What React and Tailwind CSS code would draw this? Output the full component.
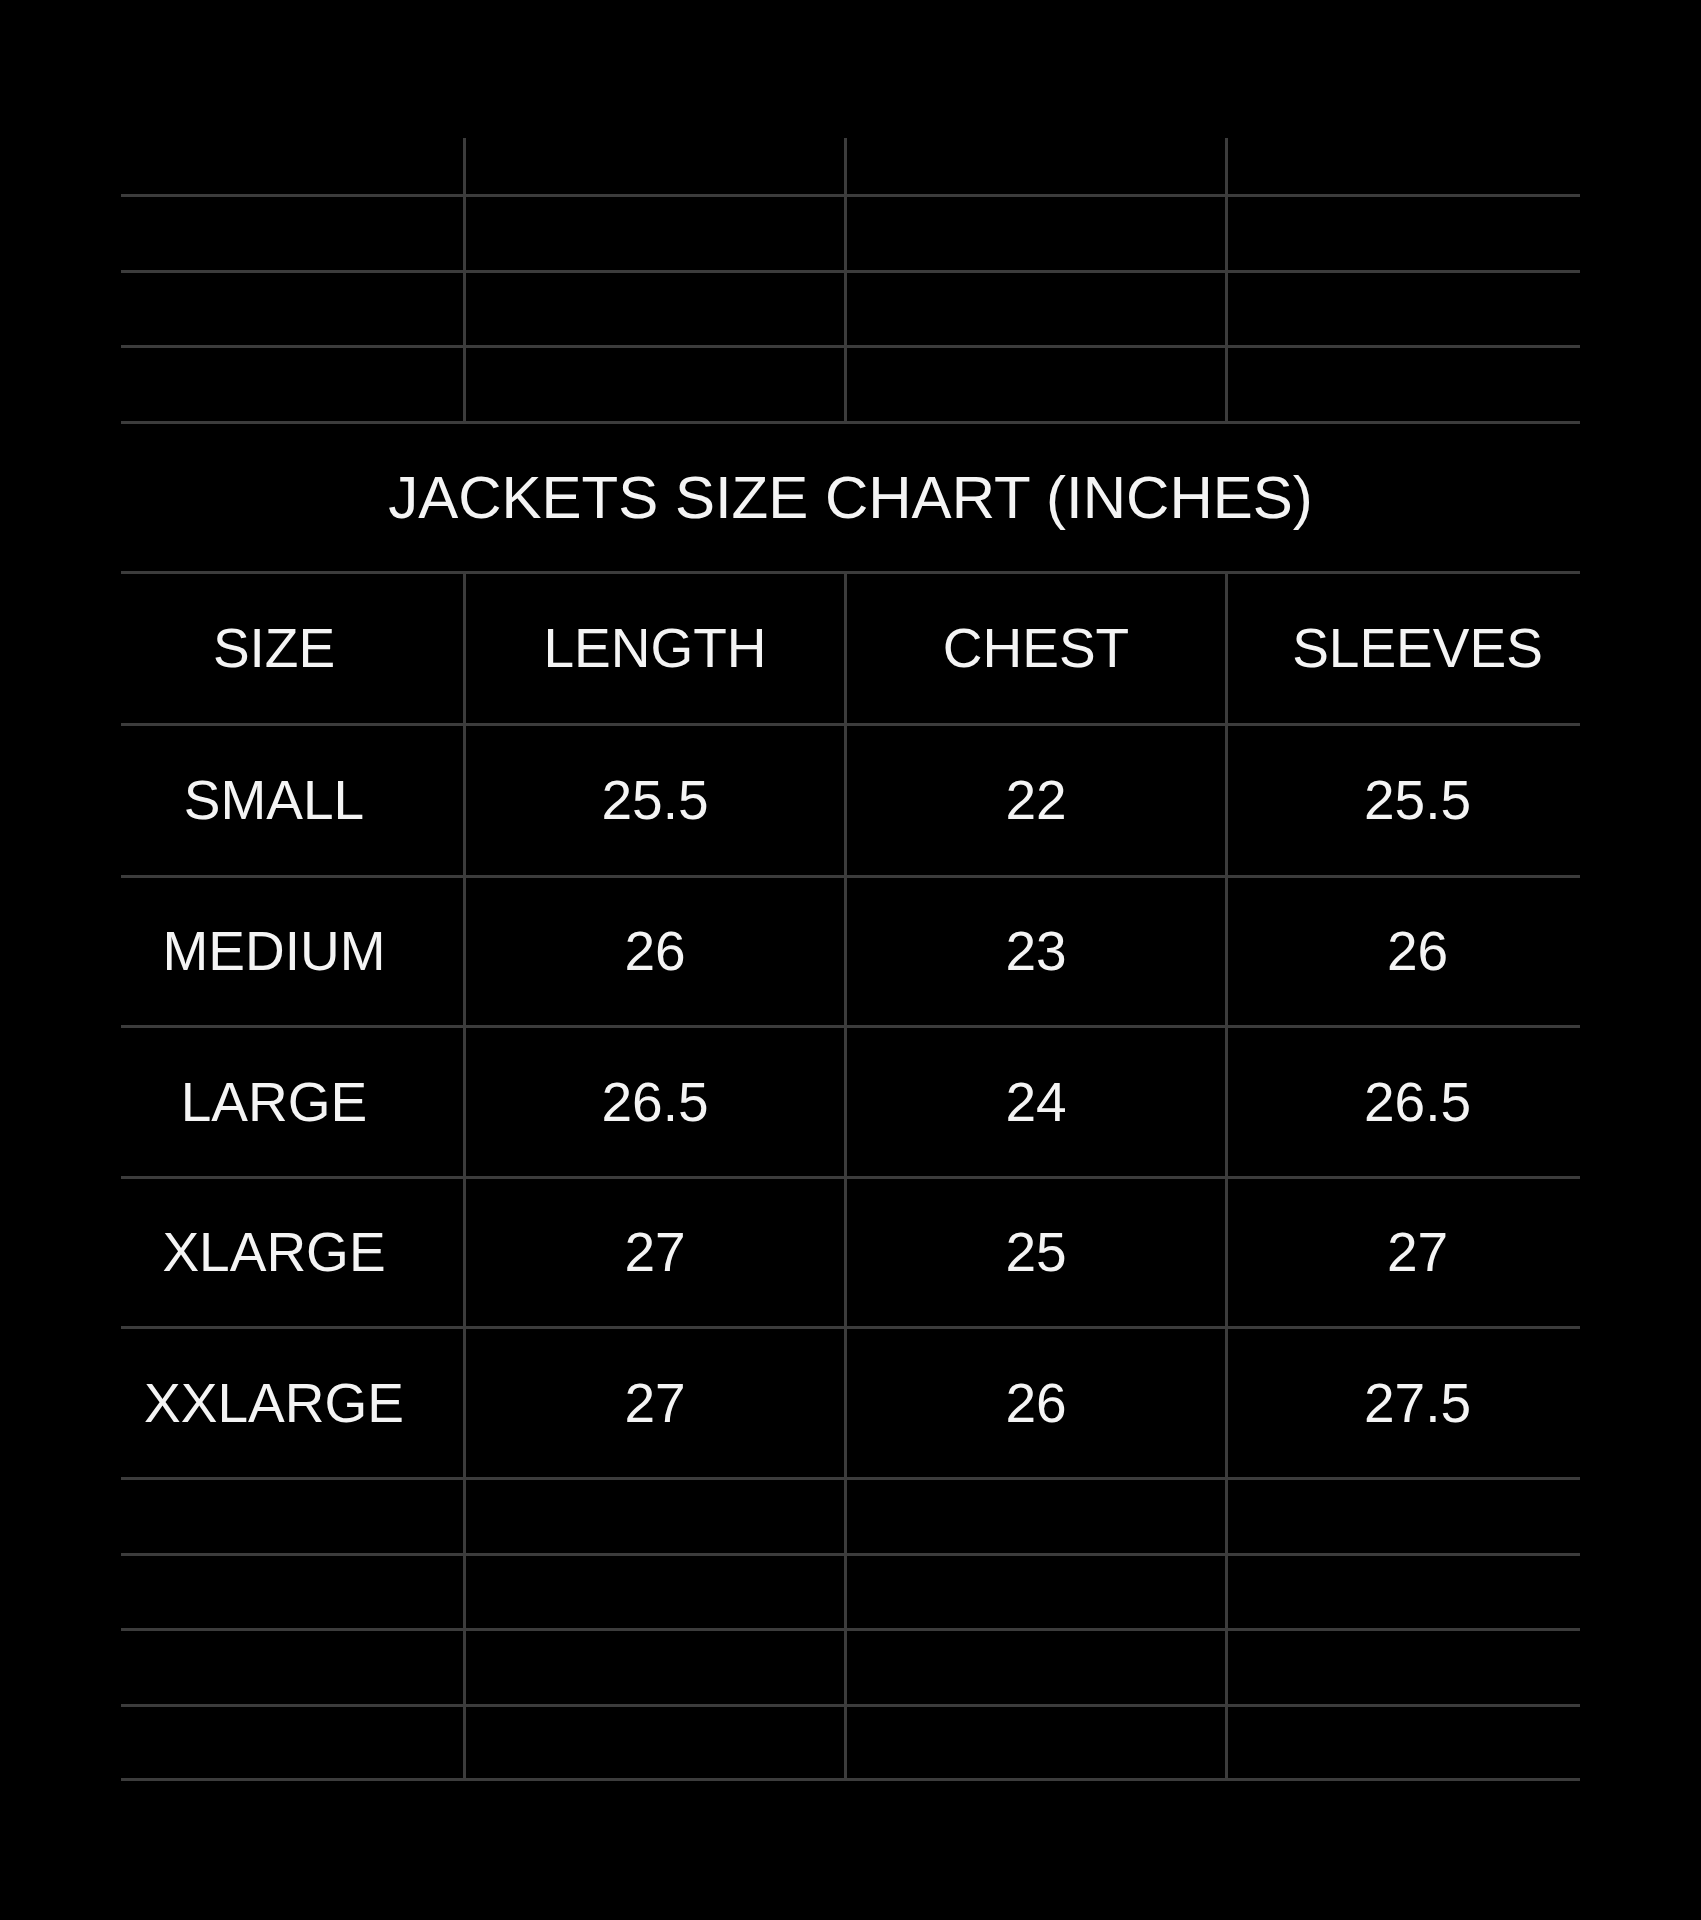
import React from 'react';

const columns = ['SIZE', 'LENGTH', 'CHEST', 'SLEEVES'];

const sizes = [
  ['SMALL', '25.5', '22', '25.5'],
  ['MEDIUM', '26', '23', '26'],
  ['LARGE', '26.5', '24', '26.5'],
  ['XLARGE', '27', '25', '27'],
  ['XXLARGE', '27', '26', '27.5'],
];

// row heights (box incl. 3px bottom line)
const topRows = ['h-[59px]', 'h-[76px]', 'h-[75px]', 'h-[76px]'];
const bottomRows = ['h-[76px]', 'h-[75px]', 'h-[76px]', 'h-[74px]'];
const dataRows = ['h-[152px]', 'h-[150px]', 'h-[151px]', 'h-[150px]', 'h-[151px]'];

// outer columns are cropped, so their text sits off-centre
const cellPad = ['pr-[36px] border-r-[3px]', 'border-r-[3px]', 'border-r-[3px]', 'pl-[27px]'];

function Row({ cells, height }) {
  return (
    <div className="grid grid-cols-[345px_381px_381px_352px]">
      {cells.map((text, i) => (
        <div
          key={i}
          className={`${height} ${cellPad[i]} flex items-center justify-center border-b-[3px] border-[#3c3c3c] whitespace-nowrap`}
        >
          {text}
        </div>
      ))}
    </div>
  );
}

export default function App() {
  return (
    <div
      className="min-h-[1920px] w-full bg-black pt-[138px] pl-[121px] text-[#f4f4f4]"
      style={{ fontFamily: '"Liberation Sans", Arial, sans-serif' }}
    >
      <div className="w-[1459px] text-[55px] leading-none">
        {/* empty rows above */}
        {topRows.map((h, i) => (
          <Row key={'t' + i} cells={['', '', '', '']} height={h} />
        ))}

        {/* title */}
        <div className="h-[150px] flex items-center justify-center border-b-[3px] border-[#3c3c3c] text-[60px]">
          JACKETS SIZE CHART (INCHES)
        </div>

        {/* header */}
        <Row cells={columns} height="h-[152px]" />

        {/* data */}
        {sizes.map((row, i) => (
          <Row key={row[0]} cells={row} height={dataRows[i]} />
        ))}

        {/* empty rows below */}
        {bottomRows.map((h, i) => (
          <Row key={'b' + i} cells={['', '', '', '']} height={h} />
        ))}
      </div>
    </div>
  );
}
